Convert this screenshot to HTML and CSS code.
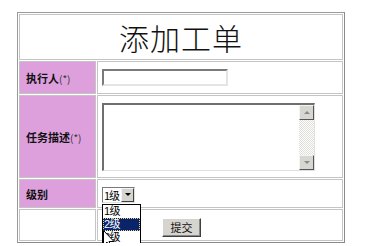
FILE: index.html
```html
<!DOCTYPE html>
<html lang="zh">
<head>
<meta charset="utf-8">
<link rel="stylesheet" href="styles.css">
</head>
<body>
<table class="form">
  <tr>
    <td class="title" colspan="2">添加工单</td>
  </tr>
  <tr class="r1">
    <th class="label"><b>执行人</b><span class="req">(*)</span></th>
    <td class="field"><div class="input"></div></td>
  </tr>
  <tr class="r2">
    <th class="label"><b>任务描述</b><span class="req">(*)</span></th>
    <td class="field">
      <div class="textarea">
        <div class="ta-body"></div>
        <div class="scroll">
          <div class="sbtn"><span class="tri up"></span></div>
          <div class="track"></div>
          <div class="sbtn"><span class="tri down"></span></div>
        </div>
      </div>
    </td>
  </tr>
  <tr class="r3">
    <th class="label"><b>级别</b></th>
    <td class="field">
      <div class="select">
        <span class="sel-text">1级</span>
        <span class="sel-btn"><span class="tri down"></span></span>
        <div class="list">
          <div class="opt">1级</div>
          <div class="opt active">2级</div>
          <div class="opt">3级</div>
          <svg class="cursor" width="12" height="19" viewBox="0 0 12 19"><path d="M0.5 0.5 L0.5 15.5 L4 12 L6.5 18 L8.5 17 L6 11.5 L11 11.5 Z" fill="#fff" stroke="#000" stroke-width="1"/></svg>
        </div>
      </div>
    </td>
  </tr>
  <tr class="r4">
    <td class="blank"></td>
    <td class="submit-cell"><span class="button">提交</span></td>
  </tr>
</table>
</body>
</html>
```
FILE: styles.css
```css
html, body {
  margin: 0;
  background: #fff;
  font-family: "Noto Sans CJK SC", "DejaVu Sans", sans-serif;
}
.form {
  margin: 12px 0 0 17px;
  width: 328px;
  border: 1px solid #9a9a9a;
  border-right-color: #8a8a8a;
  border-bottom-color: #8a8a8a;
  border-spacing: 1px;
  border-collapse: separate;
}
.form td, .form th {
  border: 1px solid #c4c4c4;
  padding: 0;
}
.title {
  height: 44px;
  text-align: center;
  font-size: 30px;
  font-weight: 300;
  line-height: 44px;
  color: #111;
  letter-spacing: 1px;
}
.label {
  width: 69px;
  background: #dda0dd;
  text-align: left;
  padding-left: 6px !important;
  font-size: 11px;
  color: #111;
  font-weight: normal;
}
.label b { font-weight: bold; }
.req { font-size: 10px; color: #333; }
.r1 td, .r1 th { height: 31px; }
.r2 td, .r2 th { height: 81px; }
.r3 td, .r3 th { height: 27px; }
.r4 td { height: 30px; }
.field { padding-left: 4px !important; vertical-align: middle; }
.input {
  width: 122px;
  height: 13px;
  border: 2px solid;
  border-color: #7a7a7a #e4e4e4 #e4e4e4 #7a7a7a;
  background: #fff;
}
.textarea {
  width: 213px;
  height: 68px;
  display: flex;
  border-top: 2px solid #6f6f6f;
  border-left: 2px solid #6f6f6f;
  border-bottom: 1px solid #e0e0e0;
  border-right: 1px solid #e0e0e0;
  box-sizing: border-box;
}
.ta-body { flex: 1; }
.scroll {
  width: 15px;
  display: flex;
  flex-direction: column;
}
.sbtn {
  height: 15px;
  background: #d8d6d0;
  border: 1px solid;
  border-color: #f4f4f4 #555 #555 #f4f4f4;
  box-sizing: border-box;
  display: flex;
  align-items: center;
  justify-content: center;
}
.track {
  flex: 1;
  background-color: #fff;
  background-image: linear-gradient(45deg, #e0ded8 25%, transparent 25%, transparent 75%, #e0ded8 75%),
    linear-gradient(45deg, #e0ded8 25%, transparent 25%, transparent 75%, #e0ded8 75%);
  background-size: 2px 2px;
  background-position: 0 0, 1px 1px;
}
.tri {
  width: 0; height: 0;
  border-left: 3px solid transparent;
  border-right: 3px solid transparent;
}
.tri.up { border-bottom: 3px solid #8a8a8a; }
.tri.down { border-top: 3px solid #8a8a8a; }
.select {
  position: relative;
  width: 33px;
  height: 16px;
  display: flex;
  align-items: stretch;
  border: 1px solid #7a7a7a;
  border-right-color: #e0e0e0;
  border-bottom-color: #e0e0e0;
  box-sizing: border-box;
  font-size: 11px;
  margin-top: 2px;
}
.sel-text { flex: 1; line-height: 14px; padding-left: 1px; color: #000; letter-spacing: -1px; }
.sel-btn {
  width: 13px;
  background: #d6d4ce;
  border: 1px solid;
  border-color: #f4f4f4 #404040 #404040 #f4f4f4;
  box-sizing: border-box;
  display: flex;
  align-items: center;
  justify-content: center;
}
.sel-btn .tri.down { border-top-color: #000; }
.list {
  position: absolute;
  left: -1px;
  top: 16px;
  width: 37px;
  border: 1px solid #000;
  background: #fff;
  font-family: "Liberation Sans", "Noto Sans CJK SC", sans-serif;
  font-size: 11px;
  line-height: 13px;
}
.opt { height: 13px; padding-left: 1px; letter-spacing: -0.5px; color: #000; overflow: hidden; }
.opt.active {
  background: #0a246a;
  color: #fff;
  outline: 1px dotted #f0d080;
  outline-offset: -1px;
}
.cursor {
  position: absolute;
  left: 0;
  top: 25px;
}
.submit-cell { padding-left: 64px !important; vertical-align: middle; }
.button {
  display: inline-block;
  width: 39px;
  height: 19px;
  box-sizing: border-box;
  background: #d6d4ce;
  border: 1px solid;
  border-color: #fff #404040 #404040 #fff;
  box-shadow: inset -1px -1px 0 #888;
  text-align: center;
  font-size: 11px;
  line-height: 16px;
  color: #111;
}
```
